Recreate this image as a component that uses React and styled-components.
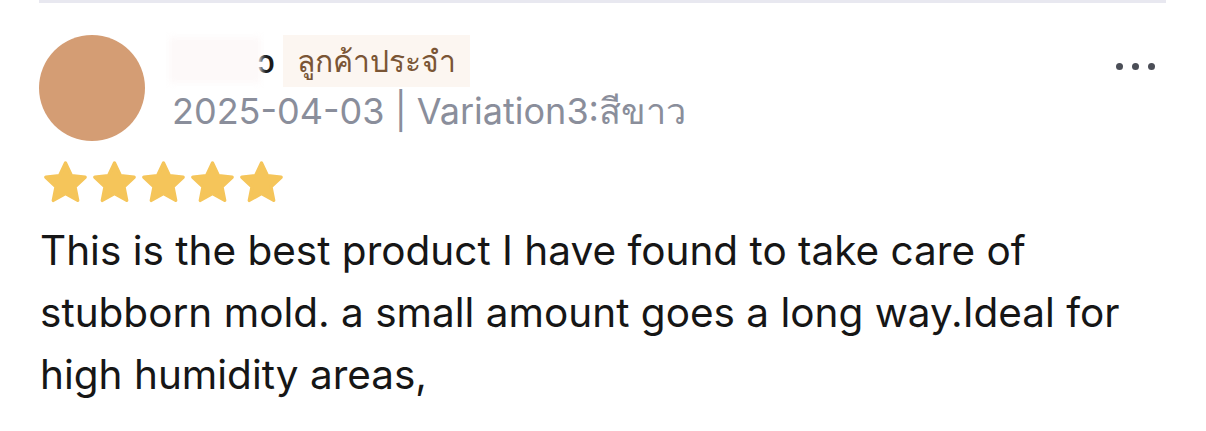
import React from "react";
import styled, { createGlobalStyle } from "styled-components";

const GlobalStyle = createGlobalStyle`
  html, body {
    margin: 0;
    padding: 0;
    background: #ffffff;
  }
  body {
    font-family: "Inter", "Noto Sans", "DejaVu Sans", sans-serif;
  }
`;

const Review = styled.div`
  width: 1206px;
  height: 431px;
  padding: 0 40px 0 39px;
  box-sizing: border-box;
  overflow: hidden;
`;

const Divider = styled.div`
  height: 3px;
  background: #e8e8f0;
`;

const Header = styled.div`
  display: flex;
  align-items: flex-start;
  margin-top: 32px;
`;

const Avatar = styled.div`
  width: 106px;
  height: 106px;
  border-radius: 50%;
  background: #d49d74;
  flex-shrink: 0;
`;

const Info = styled.div`
  flex: 1;
  display: flex;
  flex-direction: column;
  margin-left: 24px;
`;

const NameRow = styled.div`
  display: flex;
  align-items: center;
  height: 52px;
`;

const Name = styled.span`
  position: relative;
  display: inline-flex;
  align-items: center;
  justify-content: flex-end;
  width: 106px;
  height: 52px;
  font-size: 32px;
  font-weight: 500;
  color: #1a1a1a;

  &::before {
    content: "";
    position: absolute;
    left: 0;
    top: 2px;
    width: 92px;
    height: 46px;
    background: #fdf9f9;
    filter: blur(3px);
  }
`;

const Badge = styled.span`
  display: inline-flex;
  align-items: center;
  height: 52px;
  margin-left: 8px;
  padding: 0 14px;
  background: #fcf6f1;
  color: #7a5535;
  font-size: 30px;
`;

const Meta = styled.div`
  margin-top: 0;
  font-size: 36px;
  color: #8a8e9b;
  line-height: 48px;
  padding-left: 3px;
`;

const More = styled.div`
  display: flex;
  gap: 9px;
  margin-top: 28px;
  margin-right: 11px;
`;

const Dot = styled.span`
  width: 7px;
  height: 7px;
  border-radius: 50%;
  background: #4b4e57;
`;

const Stars = styled.div`
  display: flex;
  gap: 6px;
  margin-top: 20px;
  margin-left: 5px;
`;

const Body = styled.p`
  margin: 17px 0 0 1px;
  font-size: 40.5px;
  line-height: 62px;
  color: #161616;
  width: 1100px;
`;

const Star = () => (
  <svg width="43" height="42" viewBox="1.6 1.3 20.8 20.2">
    <path
      fill="#f5c55a"
      stroke="#f5c55a"
      strokeWidth="1.6"
      strokeLinejoin="round"
      d="M12 2.2l2.9 6.1 6.6.8-4.9 4.6 1.3 6.6L12 17l-5.9 3.3 1.3-6.6-4.9-4.6 6.6-.8z"
    />
  </svg>
);

export default function App() {
  return (
    <>
      <GlobalStyle />
      <Review>
        <Divider />
        <Header>
          <Avatar />
          <Info>
            <NameRow>
              <Name>ɔ</Name>
              <Badge>ลูกค้าประจำ</Badge>
            </NameRow>
            <Meta>2025-04-03 | Variation3:สีขาว</Meta>
          </Info>
          <More>
            <Dot />
            <Dot />
            <Dot />
          </More>
        </Header>
        <Stars>
          {[0, 1, 2, 3, 4].map((i) => (
            <Star key={i} />
          ))}
        </Stars>
        <Body>
          This is the best product I have found to take care of stubborn mold. a
          small amount goes a long way.Ideal for high humidity areas,
        </Body>
      </Review>
    </>
  );
}
